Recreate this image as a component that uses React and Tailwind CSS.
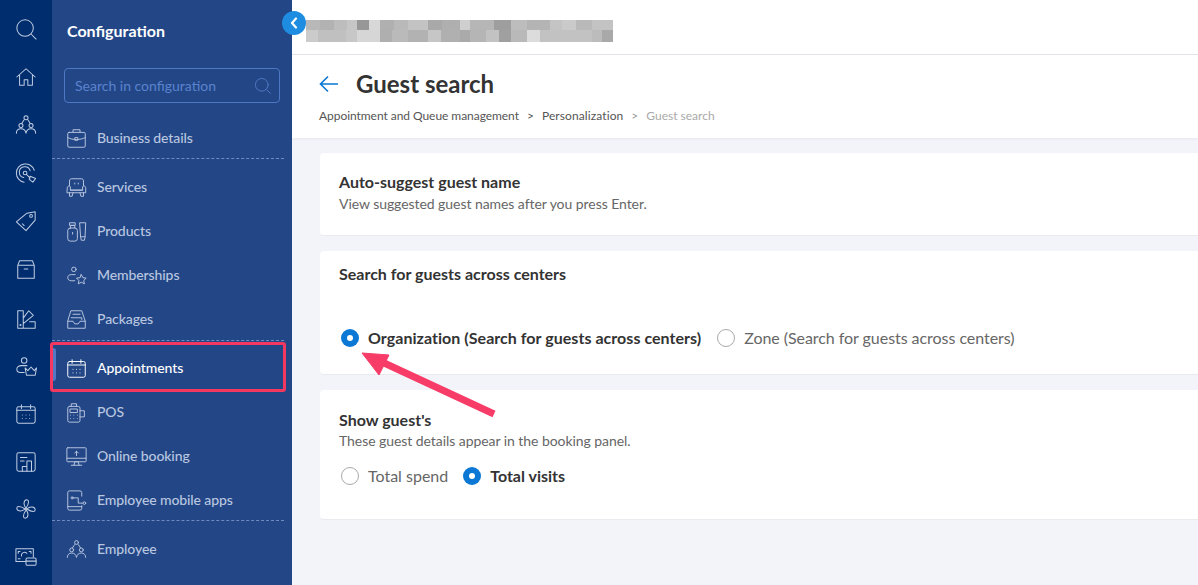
const Svg = ({ children, size = 22, className = "" }) => (
  <svg width={size} height={size} viewBox="0 0 24 24" fill="none" stroke="currentColor" strokeWidth="1.1" strokeLinecap="round" strokeLinejoin="round" className={className}>
    {children}
  </svg>
);

const SearchIcon = (p) => <Svg {...p}><circle cx="11" cy="11" r="9" /><path d="M18 18l5 5" /></Svg>;
const HomeIcon = (p) => <Svg {...p}><path d="M2 12L12 3l10 9M5 10v11h5v-6h4v6h5V10" /></Svg>;
const TeamIcon = (p) => <Svg {...p}><circle cx="12" cy="4" r="2.200" /><path d="M9.800 6.500L7.500 10M14.200 6.500l2.300 3.500" /><circle cx="6.500" cy="12.500" r="2.200" /><circle cx="17.500" cy="12.500" r="2.200" /><path d="M1.500 21c0-3 2-5 5-5s5 2 5.500 5c.5-3 2.500-5 5.500-5s5 2 5 5" /></Svg>;
const TargetIcon = (p) => <Svg {...p}><path d="M21 9A10 10 0 1 0 10 22" /><path d="M16.500 9.500A6 6 0 1 0 9.500 17" /><circle cx="11" cy="12" r="2" /><path d="M12.500 13.500l4 4" /><path d="M16.500 15.500l6 2.500-3 4-4-3z" /></Svg>;
const TagIcon = (p) => <Svg {...p}><path d="M1.500 13L13 3.500l9-1.500 0 9-10 11.500z" /><circle cx="17.500" cy="6.500" r="1.500" /><path d="M8 15l2 2" /></Svg>;
const BoxIcon = (p) => <Svg {...p}><path d="M3 8l2-5h14l2 5v14H3zM3 8h18M10 12h4" /></Svg>;
const SwatchIcon = (p) => <Svg {...p}><path d="M3 3h6v19H3zM9 17l11-9-5-5-6 8M9 22h13v-7h-6" /><circle cx="6" cy="18.500" r=".6" /></Svg>;
const CrownIcon = (p) => <Svg {...p}><circle cx="10" cy="5" r="3" /><path d="M13 10.500H7c-3 0-5 1.500-5 4s2 3.500 4 3.500h4" /><path d="M11 13l3 3 3.500-4 3.500 4 2.500-3-1.500 8H12.500z" /></Svg>;
const CalendarIcon = (p) => <Svg {...p}><rect x="2" y="4" width="20" height="18" rx="2" /><path d="M7 2v4M17 2v4M2 8h20M8 13h.01M12 13h.01M16 13h.01M8 17h.01M12 17h.01M16 17h.01" /></Svg>;
const ChartIcon = (p) => <Svg {...p}><rect x="2" y="2" width="20" height="20" rx="2" /><path d="M6 7h7M6 11h4M8 22v-5h5v5M13 22V11h5v11" /></Svg>;
const FanIcon = (p) => <Svg {...p}><circle cx="12" cy="12" r="1.200" /><path d="M12 11C9 8 9 2 13 2c2 0 3 3-1 9M13 12c3-3 9-3 9 1 0 2-3 3-9-1M12 13c3 3 3 9-1 9-2 0-3-3 1-9M11 12c-3 3-9 3-9-1 0-2 3-3 9 1" /></Svg>;
const MoneyIcon = (p) => <Svg {...p}><path d="M12 17H1V3h19v9" /><path d="M7 11a3.500 3.500 0 0 1 6-3M3.500 6h2M3.500 6v2M17.500 6h-2M17.500 6v2M3.500 14h2" /><rect x="12" y="13" width="11" height="8" rx="1.500" /><path d="M12 16.500h11" /></Svg>;
const BriefcaseIcon = (p) => <Svg {...p}><rect x="2" y="5" width="20" height="17" rx="1.500" /><path d="M8 5V2h8v3M2 11c6 3 14 3 20 0" /><rect x="10.500" y="11" width="3" height="3" /></Svg>;
const SofaIcon = (p) => <Svg {...p}><path d="M4 10V4.500C4 3 5 2 6.500 2h11C19 2 20 3 20 4.500V10M5 15h14M1.500 12a2 2 0 0 1 3.500-1v4h14v-4a2 2 0 0 1 3.500 1v6H1.500zM4 18v4h3l1-4M20 18v4h-3l-1-4M10 7v1M14 7v1" /></Svg>;
const BottlesIcon = (p) => <Svg {...p}><rect x="2" y="8" width="11" height="15" rx="3" /><path d="M5 8V5h5v3M4.500 2h6v3h-6zM7.500 13v2" /><path d="M16 2h6.500l-.8 17-.7 3h-3.500l-.7-3zM16.700 18h5" /></Svg>;
const MemberIcon = (p) => <Svg {...p}><circle cx="9" cy="5" r="2.600" /><path d="M10.500 11H6c-2.500 0-4 1.500-4 3.500S3.500 18 6 18h4" /><path d="M17.500 11l1.800 3.500 3.700.5-2.700 2.700.7 3.800-3.500-1.800-3.500 1.800.7-3.800L12 15l3.700-.5z" /></Svg>;
const TrayIcon = (p) => <Svg {...p}><path d="M6 2h12l4 12v8H2v-8zM8 6h8M2 14h6l2 3h4l2-3h6M6 10h12v2" /></Svg>;
const PosIcon = (p) => <Svg {...p}><rect x="2" y="5" width="14" height="18" rx="2" /><path d="M6 5V2h6v3M5 8h8v4H5zM5 15h.01M9 15h.01M13 15h.01M5 19h.01M9 19h.01M13 19h.01M16 10h5v7h-5" /></Svg>;
const MonitorIcon = (p) => <Svg {...p}><rect x="1" y="2" width="22" height="16" rx="1" /><path d="M1 14h22M9 22l1-4h4l1 4M6 22h12M12 11V6M10 8l2-2 2 2" /></Svg>;
const MobileIcon = (p) => <Svg {...p}><path d="M18 7V3a2 2 0 0 0-2-2H4a2 2 0 0 0-2 2v18a2 2 0 0 0 2 2h12a2 2 0 0 0 2-2v-3M2 19h16" /><circle cx="7" cy="9" r="1.200" /><circle cx="21" cy="15" r="1.500" /><path d="M8 9h6v6h5" /></Svg>;

const railIcons = [
  { Icon: SearchIcon, mt: "mt-[18px]" },
  { Icon: HomeIcon, mt: "mt-[26px]" },
  { Icon: TeamIcon, mt: "mt-[26px]" },
  { Icon: TargetIcon, mt: "mt-[26px]" },
  { Icon: TagIcon, mt: "mt-[26px]" },
  { Icon: BoxIcon, mt: "mt-[26px]" },
  { Icon: SwatchIcon, mt: "mt-[28px]" },
  { Icon: CrownIcon, mt: "mt-[26px]" },
  { Icon: CalendarIcon, mt: "mt-[25px]" },
  { Icon: ChartIcon, mt: "mt-[26px]" },
  { Icon: FanIcon, mt: "mt-[25px]" },
  { Icon: MoneyIcon, mt: "mt-[26px]" },
];

const blurTop = [
  ["w-[14px]", "bg-[#b8b8b8]"], ["w-[14px]", "bg-[#b2b2b2]"], ["w-[13px]", "bg-[#bdbdbd]"], ["w-[10px]", "bg-[#c6c6c6]"],
  ["w-[12px]", "bg-[#979797]"], ["w-[11px]", "bg-[#d8d8d8]"], ["w-[14px]", "bg-[#b0b0b0]"], ["w-[14px]", "bg-[#b9b9b9]"],
  ["w-[20px]", "bg-[#c3c3c3]"], ["w-[14px]", "bg-[#a9a9a9]"], ["w-[18px]", "bg-[#afafaf]"], ["w-[10px]", "bg-[#cfcfcf]"],
  ["w-[24px]", "bg-[#b6b6b6]"], ["w-[17px]", "bg-[#9e9e9e]"], ["w-[16px]", "bg-[#bdbdbd]"], ["w-[23px]", "bg-[#b4b4b4]"],
  ["w-[12px]", "bg-[#c4c4c4]"], ["w-[14px]", "bg-[#cacaca]"], ["w-[16px]", "bg-[#b9b9b9]"], ["w-[21px]", "bg-[#c3c3c3]"],
];
const blurBottom = [
  ["w-[12px]", "bg-[#cbcbcb]"], ["w-[28px]", "bg-[#c0c0c0]"], ["w-[11px]", "bg-[#c7c7c7]"], ["w-[23px]", "bg-[#d6d6d6]"],
  ["w-[12px]", "bg-[#afafaf]"], ["w-[16px]", "bg-[#bababa]"], ["w-[20px]", "bg-[#b2b2b2]"], ["w-[13px]", "bg-[#c6c6c6]"],
  ["w-[19px]", "bg-[#b0b0b0]"], ["w-[10px]", "bg-[#aaaaaa]"], ["w-[16px]", "bg-[#b5b5b5]"], ["w-[13px]", "bg-[#c2c2c2]"],
  ["w-[12px]", "bg-[#a0a0a0]"], ["w-[16px]", "bg-[#b9b9b9]"], ["w-[13px]", "bg-[#dcdcdc]"], ["w-[52px]", "bg-[#c2c2c2]"],
  ["w-[10px]", "bg-[#bcbcbc]"], ["w-[11px]", "bg-[#a9a9a9]"],
];

function NavItem({ Icon, label, active, className = "" }) {
  return (
    <div className={`flex h-[44px] items-center pl-[14px] text-sm font-medium ${active ? "text-white" : "text-[#b9c6e0]"} ${className}`}>
      <Icon size={21} />
      <span className="ml-[10px] tracking-[-0.1px]">{label}</span>
    </div>
  );
}

function Radio({ checked, label, labelClass = "" }) {
  return (
    <div className="flex items-center gap-[9px]">
      {checked ? (
        <span className="flex size-[18px] items-center justify-center rounded-full bg-[#0a78d4]">
          <span className="size-[6px] rounded-full bg-white" />
        </span>
      ) : (
        <span className="size-[18px] rounded-full border border-[#a9a9a9] bg-white" />
      )}
      <span className={`${checked ? "text-base font-bold text-[#333]" : "text-base text-[#666]"} ${labelClass}`}>{label}</span>
    </div>
  );
}

export default function App() {
  return (
    <div className="relative flex h-[585px] overflow-hidden bg-[#f3f4f9] font-['Lato',sans-serif]">
      <div className="flex w-[52px] shrink-0 flex-col items-center bg-[#002d6e] text-[#c0cde3]">
        {railIcons.map(({ Icon, mt }, i) => (
          <Icon key={i} size={22} className={`shrink-0 ${mt}`} />
        ))}
      </div>

      <div className="w-[240px] shrink-0 bg-[#234786]">
        <h2 className="mt-[20px] pl-[15px] text-base leading-[22px] font-bold text-white">Configuration</h2>
        <div className="mx-[12px] mt-[26px] flex h-[35px] w-[216px] items-center justify-between rounded-[4px] border border-[#4f78c2] pr-[8px] pl-[10px]">
          <span className="text-sm text-[#5a83cf]">Search in configuration</span>
          <SearchIcon size={17} className="text-[#5a83cf]" />
        </div>
        <NavItem Icon={BriefcaseIcon} label="Business details" className="mt-[13px]" />
        <div className="mt-[-2px] w-[232px] border-t border-dashed border-[#6f8bbd]" />
        <NavItem Icon={SofaIcon} label="Services" className="mt-[6px]" />
        <NavItem Icon={BottlesIcon} label="Products" />
        <NavItem Icon={MemberIcon} label="Memberships" />
        <NavItem Icon={TrayIcon} label="Packages" />
        <div className="mt-[-1px] w-[232px] border-t border-dashed border-[#6f8bbd]" />
        <NavItem Icon={CalendarIcon} label="Appointments" active className="mt-[5px]" />
        <NavItem Icon={PosIcon} label="POS" />
        <NavItem Icon={MonitorIcon} label="Online booking" />
        <NavItem Icon={MobileIcon} label="Employee mobile apps" />
        <div className="mt-[-2px] w-[232px] border-t border-dashed border-[#6f8bbd]" />
        <NavItem Icon={TeamIcon} label="Employee" className="mt-[6px]" />
      </div>

      <div className="flex min-w-0 flex-1 flex-col">
        <div className="h-[55px] shrink-0 border-b border-[#e4e5ea] bg-white pt-[20px] pl-[14px]">
          <div className="flex h-[10px]">
            {blurTop.map(([w, c], i) => <div key={i} className={`${w} ${c}`} />)}
          </div>
          <div className="flex h-[12px]">
            {blurBottom.map(([w, c], i) => <div key={i} className={`${w} ${c}`} />)}
          </div>
        </div>
        <div className="h-[83px] shrink-0 bg-white pl-[27px] shadow-[0_1px_3px_rgba(0,0,0,0.05)]">
          <div className="mt-[11px] flex items-center">
            <svg width="20" height="20" viewBox="0 0 20 20" fill="none" stroke="#0a78d4" strokeWidth="1.600" className="shrink-0">
              <path d="M19 10H1.500M9 2.500L1.500 10 9 17.500" />
            </svg>
            <h1 className="ml-[17px] text-[24px] leading-[36px] font-bold text-[#333]">Guest search</h1>
          </div>
          <div className="mt-[5px] flex text-xs leading-[18px] text-[#555]">
            <span className="tracking-[-0.05px]">Appointment and Queue management</span>
            <span className="mx-[8px]">&gt;</span>
            <span className="tracking-[0.1px]">Personalization</span>
            <span className="mx-[8px] text-[#999]">&gt;</span>
            <span className="text-[#aaa]">Guest search</span>
          </div>
        </div>

        <div className="flex flex-col gap-[15px] pt-[15px] pl-[28px]">
          <div className="h-[83px] rounded-l-[4px] border-b border-[#e9eaee] bg-white pt-[19px] pl-[19px]">
            <h3 className="text-base leading-[20px] font-bold text-[#333]">Auto-suggest guest name</h3>
            <p className="mt-[2px] text-sm leading-[20px] tracking-[-0.06px] text-[#666]">View suggested guest names after you press Enter.</p>
          </div>
          <div className="h-[124px] rounded-l-[4px] border-b border-[#e9eaee] bg-white pt-[13px] pl-[19px]">
            <h3 className="text-base leading-[20px] font-bold text-[#333]">Search for guests across centers</h3>
            <div className="mt-[42px] flex items-center gap-[16px] pl-[2px]">
              <Radio checked label="Organization (Search for guests across centers)" labelClass="tracking-[0.04px]" />
              <Radio label="Zone (Search for guests across centers)" labelClass="tracking-[-0.05px]" />
            </div>
          </div>
          <div className="h-[130px] rounded-l-[4px] border-b border-[#e9eaee] bg-white pt-[20px] pl-[19px]">
            <h3 className="text-base leading-[20px] font-bold text-[#333]">Show guest's</h3>
            <p className="mt-px text-sm leading-[20px] tracking-[-0.06px] text-[#666]">These guest details appear in the booking panel.</p>
            <div className="mt-[13px] flex items-center gap-[15px] pl-[2px]">
              <Radio label="Total spend" />
              <Radio checked label="Total visits" />
            </div>
          </div>
        </div>
      </div>

      <button className="absolute top-[11px] left-[282px] flex size-[24px] items-center justify-center rounded-full bg-[#1e8ce0]">
        <svg width="10" height="12" viewBox="0 0 10 12" fill="none" stroke="white" strokeWidth="2.200" strokeLinecap="round" strokeLinejoin="round">
          <path d="M7 1.500L3 6l4 4.500" />
        </svg>
      </button>

      <div className="absolute top-[348px] left-[52px] h-[33px] w-[4px] rounded-r-[3px] bg-[#5478c4]" />
      <div className="absolute top-[342px] left-[50px] h-[50px] w-[236px] rounded-[3px] border-[3px] border-[#f5385f]" />

      <svg className="absolute top-0 left-0" width="1198" height="585" fill="none">
        <path d="M494 414L382 362" stroke="#f73c68" strokeWidth="7" />
        <path d="M362 353L389 355L379 375Z" fill="#f73c68" stroke="#f73c68" strokeWidth="1" />
      </svg>
    </div>
  );
}
